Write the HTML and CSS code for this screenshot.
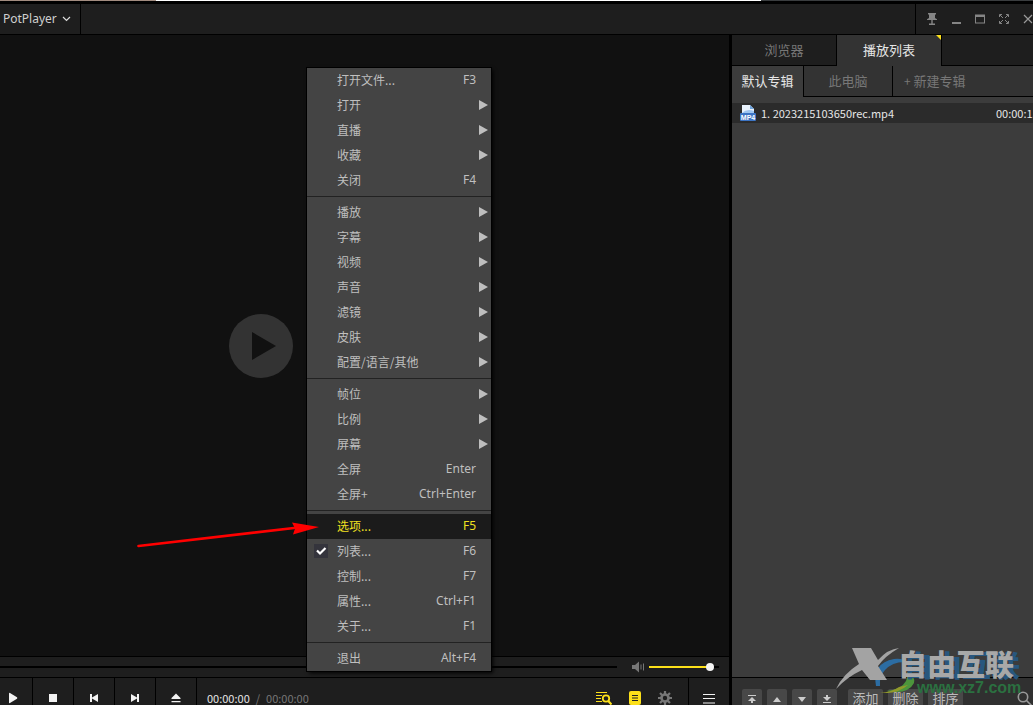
FILE: index.html
```html
<!DOCTYPE html>
<html lang="zh-CN">
<head>
<meta charset="utf-8">
<title>PotPlayer</title>
<link rel="stylesheet" href="styles.css">
</head>
<body>
<div class="desktop-edge"><span class="edge-tan"></span><span class="edge-white"></span><span class="edge-dark"></span></div>
<header class="titlebar">
  <button class="app-menu">PotPlayer
    <svg width="9" height="6" viewBox="0 0 9 6"><path d="M1 1l3.5 3.5L8 1" fill="none" stroke="#ddd" stroke-width="1.2"/></svg>
  </button>
  <div class="window-controls">
    <button aria-label="置顶"><svg width="12" height="12" viewBox="0 0 12 12" fill="#858585"><path d="M2 0h8v1.500H9V5l2 1.200V7H1v-.8L3 5V1.500H2zM5.300 7h1.400v3.500H5.300zM3 10.500h6V12H3z"/></svg></button>
    <button aria-label="最小化"><svg width="12" height="12" viewBox="0 0 12 12"><path d="M2 9h9v2H2z" fill="#858585"/></svg></button>
    <button aria-label="最大化"><svg width="12" height="12" viewBox="0 0 12 12"><path d="M1 1.500h10v9H1zM2 4v5.500h8V4z" fill="#858585" fill-rule="evenodd"/></svg></button>
    <button aria-label="全屏"><svg width="12" height="12" viewBox="0 0 12 12" fill="none" stroke="#858585"><path d="M1.500 4V1.500H4M8 1.500h2.500V4M10.500 8v2.500H8M4 10.500H1.500V8M2 2l3 3M10 2L7 5M2 10l3-3M10 10L7 7"/></svg></button>
    <button aria-label="关闭"><svg width="12" height="12" viewBox="0 0 12 12"><path d="M2 2l8 8M10 2l-8 8" fill="none" stroke="#999" stroke-width="1.200"/></svg></button>
  </div>
</header>
<main class="window">
  <section class="player">
    <div class="stage">
      <button class="big-play" aria-label="播放"><svg width="26" height="30" viewBox="0 0 26 30"><path d="M1 1l24 14L1 29z" fill="#111"/></svg></button>
    </div>
    <div class="seekbar">
      <input class="seek" type="range" min="0" max="100" value="0" aria-label="进度">
      <svg width="13" height="12" viewBox="0 0 13 12"><path d="M0 4h3l4-3.500v11L3 8H0z" fill="#777"/><path d="M9 3.500v5M11.500 2.500v7" stroke="#777" fill="none"/></svg>
      <input class="volume" type="range" min="0" max="100" value="92" aria-label="音量">
    </div>
    <div class="controls">
      <button class="control first" aria-label="播放"><svg width="12" height="12" viewBox="0 0 12 12"><path d="M2 1.500Q2 .5 3 1l7 4.300Q10.600 6 10 6.700L3 11q-1 .5-1-.5z" fill="#f2f2f2"/></svg></button>
      <button class="control" aria-label="停止"><svg width="12" height="12" viewBox="0 0 12 12"><path d="M2 2h8v8H2z" fill="#f2f2f2"/></svg></button>
      <button class="control" aria-label="上一个"><svg width="12" height="12" viewBox="0 0 12 12"><path d="M2 2h2v3.500L10 2v8L4 6.500V10H2z" fill="#f2f2f2"/></svg></button>
      <button class="control" aria-label="下一个"><svg width="12" height="12" viewBox="0 0 12 12"><path d="M10 2H8v3.500L2 2v8l6-3.500V10h2z" fill="#f2f2f2"/></svg></button>
      <button class="control" aria-label="打开"><svg width="12" height="12" viewBox="0 0 12 12"><path d="M6 1.500l4.500 4.500v1h-9V6zM1.500 9h9v1.200h-9z" fill="#f2f2f2"/></svg></button>
      <div class="time"><span class="now">00:00:00</span><span>/</span><span>00:00:00</span></div>
      <div class="tools">
        <button aria-label="搜索列表"><svg width="16" height="14" viewBox="0 0 16 14" fill="none" stroke="#fce01a"><path d="M0 1.500h11M0 4.500h6M0 7.500h5M0 10.500h6" stroke-width="1.200"/><circle cx="10" cy="7.500" r="3.200" stroke-width="1.800"/><path d="M12.300 10l3.200 3.500" stroke-width="2.200"/></svg></button>
        <button aria-label="播放列表"><svg width="14" height="14" viewBox="0 0 14 14"><rect x="1" width="12" height="14" rx="2" fill="#fce01a"/><path d="M4 4.500h6M4 7h6M4 9.500h6" stroke="#222" fill="none"/></svg></button>
        <button aria-label="设置"><svg width="14" height="14" viewBox="0 0 14 14" fill="none" stroke="#777"><circle cx="7" cy="7" r="3.500" stroke-width="2.600"/><path d="M7 0v3M7 11v3M0 7h3M11 7h3M2 2l2 2M10 10l2 2M12 2l-2 2M4 10l-2 2" stroke-width="2.200"/></svg></button>
      </div>
      <button class="control menu-button" aria-label="菜单"><svg width="12" height="12" viewBox="0 0 12 12"><path d="M0 2.500h12M0 6.500h12M0 11h12" stroke="#f2f2f2" stroke-width="1.200" fill="none"/></svg></button>
    </div>
  </section>
  <aside class="playlist">
    <nav class="tabs"><button class="tab">浏览器</button><button class="tab active">播放列表</button></nav>
    <nav class="albums"><button class="album active">默认专辑</button><button class="album">此电脑</button><button class="album add"><small>+</small> 新建专辑</button></nav>
    <div class="entries">
      <div class="entry">
        <svg width="16" height="16" viewBox="0 0 16 16"><path d="M2 0h8l4 4v5H2z" fill="#e9f2fd"/><path d="M10 0l4 4h-4z" fill="#6fa4dd"/><path d="M2 8q5-5 12-2v3H2z" fill="#9ec5f0"/><rect y="8" width="16" height="8" rx="1" fill="#3c74c4"/><text class="file-badge" x="8" y="15" text-anchor="middle">MP4</text></svg>
        <span class="name">1. 2023215103650rec.mp4</span><span class="length">00:00:13</span>
      </div>
    </div>
    <footer class="list-actions">
      <div class="moves">
        <button class="square" aria-label="移到顶部"><svg width="8" height="8" viewBox="0 0 8 8"><path d="M0 0h8v1H0zM4 2l4 4H0zM3 6h2v2H3z" fill="#ccc"/></svg></button>
        <button class="square" aria-label="上移"><svg width="8" height="8" viewBox="0 0 8 8"><path d="M4 2l4 5H0z" fill="#ccc"/></svg></button>
        <button class="square" aria-label="下移"><svg width="8" height="8" viewBox="0 0 8 8"><path d="M4 7l4-5H0z" fill="#ccc"/></svg></button>
        <button class="square" aria-label="移到底部"><svg width="8" height="8" viewBox="0 0 8 8"><path d="M0 7h8v1H0zM4 6l4-4H0zM3 0h2v2H3z" fill="#ccc"/></svg></button>
      </div>
      <button class="action">添加</button><button class="action">删除</button><button class="action">排序</button>
      <button class="find" aria-label="搜索"><svg width="16" height="16" viewBox="0 0 16 16" fill="none" stroke="#999" stroke-width="1.600"><circle cx="6" cy="6" r="4.700"/><path d="M9.500 9.500L15 15"/></svg></button>
    </footer>
  </aside>
</main>

<div class="menu" role="menu">
  <button class="item">打开文件...<kbd>F3</kbd></button>
  <button class="item sub">打开</button>
  <button class="item sub">直播</button>
  <button class="item sub">收藏</button>
  <button class="item">关闭<kbd>F4</kbd></button>
  <hr>
  <button class="item sub">播放</button>
  <button class="item sub">字幕</button>
  <button class="item sub">视频</button>
  <button class="item sub">声音</button>
  <button class="item sub">滤镜</button>
  <button class="item sub">皮肤</button>
  <button class="item sub">配置/语言/其他</button>
  <hr>
  <button class="item sub">帧位</button>
  <button class="item sub">比例</button>
  <button class="item sub">屏幕</button>
  <button class="item">全屏<kbd>Enter</kbd></button>
  <button class="item">全屏+<kbd>Ctrl+Enter</kbd></button>
  <hr>
  <button class="item selected">选项...<kbd>F5</kbd></button>
  <button class="item checked"><svg class="check" width="14" height="14" viewBox="0 0 14 14"><rect width="14" height="14" fill="#34343c"/><path d="M3 6.500L6 9.500 11.500 4" fill="none" stroke="#fff" stroke-width="2.200"/></svg>列表...<kbd>F6</kbd></button>
  <button class="item">控制...<kbd>F7</kbd></button>
  <button class="item">属性...<kbd>Ctrl+F1</kbd></button>
  <button class="item">关于...<kbd>F1</kbd></button>
  <hr>
  <button class="item">退出<kbd>Alt+F4</kbd></button>
</div>

<svg class="arrow" width="184" height="32" viewBox="0 0 184 32"><path d="M2.500 27L158 9" stroke="#f00" stroke-width="2.600" stroke-linecap="round"/><path d="M156 3.500L183 8 157 15.500l2-6z" fill="#f00"/></svg>

<svg class="watermark" width="197" height="58" viewBox="0 0 197 58">
  <path d="M40 39Q36 16 58 12q9-1 13 3-14-1-22 8-6 6-5 16z" fill="#2c6da3"/>
  <path d="M50 44q15-1 20-10 2-4 1-9 9 5 7 11-6 12-28 8z" fill="#4c963c"/>
  <path d="M44 46q12-1 19-6l9-2q-8 7-20 8z" fill="#929a2b"/>
  <text class="mark-cn shadow" x="68" y="30">自由互联</text>
  <text class="mark-cn" x="62" y="29">自由互联</text>
  <path d="M16 1h19l7 12Q52 2 63 1 49 9 42 19l9 14H34L26 23Q11 30 0 42 7 27 23 17z" fill="#a3a3a3"/>
  <text class="mark-url" x="81" y="46">www.xz7.com</text>
</svg>
</body>
</html>
```
FILE: styles.css
```css
* { box-sizing: border-box; }
body {
  margin: 0; height: 100vh; overflow: hidden; position: relative;
  display: flex; flex-direction: column;
  background: #000; color: #bfbfbf;
  font: 12px/16px "Noto Sans CJK SC", sans-serif;
}
button { appearance: none; border: 0; padding: 0; margin: 0; background: none; color: inherit; font: inherit; }
svg { display: block; flex: none; }

.desktop-edge { display: flex; height: 4px; padding-bottom: 3px; flex: none; }
.edge-tan { flex: 156; background: #a28c80; }
.edge-white { flex: 605; background: #fff; }
.edge-dark { flex: 272; background: #3a3d3f; }

.titlebar { flex: none; display: flex; justify-content: space-between; height: 31px; background: #1e1e1e; border-bottom: 1px solid #000; overflow: hidden; }
.app-menu { display: flex; align-items: center; gap: 5px; padding: 0 9px 0 3px; border-right: 1px solid #000; color: #d0d0d0; font-family: "Noto Sans", "Noto Sans CJK SC", sans-serif; }
.window-controls { display: flex; align-items: center; gap: 12px; width: 118px; padding-left: 10px; border-left: 1px solid #000; overflow: hidden; }

.window { flex: 1; min-height: 0; display: grid; grid-template-columns: minmax(0, 1fr) 301px; gap: 3px; }
.player { display: flex; flex-direction: column; min-width: 0; background: #1e1e1e; }
.stage { flex: 1; display: flex; align-items: center; justify-content: center; padding-right: 207px; background: #111; }
.big-play { display: flex; align-items: center; justify-content: center; width: 64px; height: 64px; padding-left: 6px; border-radius: 50%; background: #333; }
.seekbar { display: flex; align-items: center; height: 21px; padding-right: 10px; border-top: 1px solid #000; }
.seekbar svg { margin: 0 4px 0 15px; }
input[type="range"] { appearance: none; margin: 0; height: 8px; background: none; }
.seek { flex: 1; min-width: 0; }
.seek::-webkit-slider-runnable-track { height: 2px; background: #000; }
.seek::-webkit-slider-thumb { appearance: none; width: 0; height: 0; }
.volume { width: 70px; }
.volume::-webkit-slider-runnable-track { height: 2px; background: linear-gradient(to right, #fce01a 88%, #000 88%); }
.volume::-webkit-slider-thumb { appearance: none; width: 8px; height: 8px; margin-top: -3px; border-radius: 50%; background: #f4f4f4; }

.controls { display: flex; height: 28px; border-top: 1px solid #000; overflow: hidden; }
.control { display: flex; justify-content: center; width: 41px; padding-top: 14px; border-right: 1px solid #000; }
.control.first { width: 33px; padding-right: 7px; }
.control.menu-button { border-right: 0; border-left: 1px solid #000; }
.time { display: flex; gap: 6px; padding: 13px 0 0 10px; color: #777; font-size: 11px; line-height: 14px; }
.time .now { color: #e6e6e6; }
.tools { display: flex; gap: 16px; margin-left: auto; padding: 13px 16px 0 0; }
.tools button { height: 14px; }

.playlist { display: flex; flex-direction: column; min-width: 0; background: #3c3c3c; overflow: hidden; }
.tabs { display: flex; height: 31px; background: #1e1e1e; font-size: 13px; }
.tab { width: 105px; padding-bottom: 1px; border-right: 1px solid #000; border-bottom: 1px solid #000; color: #777; }
.tab.active { position: relative; padding-bottom: 2px; border-bottom: 0; background: #333; color: #e6e6e6; }
.tab.active::after { content: ""; position: absolute; top: 0; right: 0; border-top: 5px solid #fce01a; border-left: 5px solid transparent; }
.tabs::after { content: ""; flex: 1; border-bottom: 1px solid #000; }
.albums { display: flex; height: 31px; background: #333; font-size: 13px; }
.album { width: 89px; padding-bottom: 1px; border-right: 1px solid #000; border-bottom: 1px solid #000; color: #777; }
.album.active { width: 72px; padding-bottom: 2px; border-bottom: 0; background: #3c3c3c; color: #e6e6e6; }
.album.add { flex: 1; border-right: 0; padding-left: 11px; text-align: left; }
.album small { font-size: 12px; }
.entries { flex: 1; padding-top: 6px; }
.entry { display: flex; align-items: center; height: 20px; padding-left: 8px; background: #2b2b2b; color: #e6e6e6; font-size: 11px; }
.entry .name { flex: 1; padding-left: 5px; white-space: nowrap; }
.entry .length { width: 37px; overflow: hidden; white-space: nowrap; }
.file-badge { font: bold 7px "Liberation Sans", sans-serif; fill: #fff; }
.list-actions { display: flex; gap: 5px; height: 28px; padding: 11px 0 0 10px; border-top: 1px solid #000; background: #303030; overflow: hidden; }
.moves { display: flex; gap: 5px; margin-right: 6px; }
.square { display: flex; justify-content: center; flex: none; width: 20px; height: 20px; padding-top: 6px; border-radius: 2px 2px 0 0; background: #484848; }
.action { flex: none; width: 35px; height: 20px; padding-bottom: 3px; border-radius: 2px 2px 0 0; background: #484848; color: #bbb; font-size: 13px; }
.find { margin: 2px 0 0 auto; width: 16px; height: 16px; }

.menu { position: absolute; left: 307px; top: 68px; width: 184px; background: #444; box-shadow: 0 0 0 1px #000, 2px 2px 4px #000; }
.item { display: flex; align-items: center; width: 100%; height: 25px; padding: 0 15px 1px 30px; text-align: left; white-space: nowrap; }
.item kbd { margin-left: auto; font: 12px/18px "Noto Sans", sans-serif; }
.item.selected { background: #1b1b1b; color: #f0e020; }
.item.sub { padding-right: 3px; }
.item.sub::after { content: ""; margin-left: auto; border-left: 9px solid #bfbfbf; border-top: 5px solid transparent; border-bottom: 5px solid transparent; }
.item.checked { padding-left: 7px; }
.check { margin-right: 9px; }
.menu hr { height: 1px; margin: 3px 0; border: 0; background: #222; }
.arrow { position: absolute; left: 136px; top: 519px; }
.watermark { position: absolute; right: 0; bottom: 0; }
.mark-cn { font: 900 29px "Noto Sans CJK SC", sans-serif; fill: #a8a8a8; }
.mark-cn.shadow { fill: #28577e; }
.mark-url { font: bold 16px "Liberation Sans", sans-serif; fill: #2b7040; }
```
